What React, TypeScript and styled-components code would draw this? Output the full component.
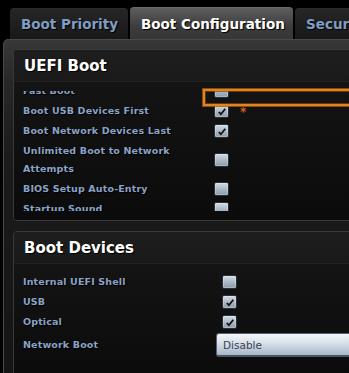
import React from "react";
import styled, { createGlobalStyle } from "styled-components";

const Global = createGlobalStyle`
  html, body { margin: 0; padding: 0; background: #000; overflow: hidden; }
  body { font-family: "DejaVu Sans", "Liberation Sans", sans-serif; }
`;

const Page = styled.div`
  width: 700px;
  height: 373px;
  padding-top: 7px;
  box-sizing: border-box;
  background: #000;
`;

const TabBar = styled.div`
  display: flex;
  align-items: flex-end;
  gap: 2px;
  padding-left: 10px;
  height: 32px;
`;

const Tab = styled.div<{ $active?: boolean; $w: number }>`
  width: ${(p) => p.$w}px;
  height: ${(p) => (p.$active ? 32 : 31)}px;
  box-sizing: border-box;
  display: flex;
  align-items: center;
  padding-left: 11px;
  border-radius: 4px 4px 0 0;
  font-weight: bold;
  font-size: 13.5px;
  color: ${(p) => (p.$active ? "#ffffff" : "#7f9cc4")};
  text-shadow: 1px 1px 1px #000;
  background: ${(p) =>
    p.$active
      ? "linear-gradient(#5e5e5e, #3c3c3c 60%, #363636)"
      : "linear-gradient(#262626, #181818)"};
  border-top: 1px solid ${(p) => (p.$active ? "#6a6a6a" : "#2c2c2c")};
`;

const Panel = styled.div`
  margin-left: 3px;
  width: 680px;
  height: 340px;
  box-sizing: border-box;
  border: 1px solid #4a4a4a;
  border-radius: 5px 0 0 0;
  background: linear-gradient(#383838, #282828 40px, #1b1b1b 120px, #151515);
  padding: 9px 0 0 9px;
  display: flex;
  flex-direction: column;
  gap: 10px;
`;

const Section = styled.div`
  position: relative;
  width: 650px;
  box-sizing: border-box;
  border: 1px solid #3a3a3a;
  border-radius: 4px;
  background: #0d0d0d;
  overflow: hidden;
  flex-shrink: 0;
`;

const SectionHeader = styled.div`
  height: 31px;
  display: flex;
  align-items: center;
  padding-left: 10px;
  background: linear-gradient(#1e1e1e, #1a1a1a);
  border-bottom: 1px solid #222;
  font-size: 15px;
  font-weight: bold;
  color: #fff;
  text-shadow: 1px 1px 1px #000;
`;

const Body = styled.div<{ $pt: number; $pb: number }>`
  position: relative;
  padding: ${(p) => p.$pt}px 0 ${(p) => p.$pb}px 9px;
  background: linear-gradient(#141414, #0b0b0b);
`;

const Viewport = styled.div`
  height: 120px;
  overflow: hidden;
`;

const Scroller = styled.div`
  margin-top: -10px;
`;

const Row = styled.div<{ $lw: number; $h?: number }>`
  display: grid;
  grid-template-columns: ${(p) => p.$lw}px auto;
  align-items: center;
  min-height: ${(p) => p.$h ?? 20}px;
  padding: 1px 0;
  box-sizing: border-box;
`;

const Label = styled.div`
  font-weight: bold;
  font-size: 9.5px;
  letter-spacing: 0.15px;
  line-height: 18px;
  color: #8aa2c6;
  text-shadow: 1px 1px 1px #000;
  width: 160px;
`;

const Control = styled.div`
  display: flex;
  align-items: center;
`;

const Box = styled.div<{ $ml: number }>`
  width: 15px;
  height: 14px;
  box-sizing: border-box;
  margin-left: ${(p) => p.$ml}px;
  border: 1px solid #26303b;
  border-radius: 2px;
  background: linear-gradient(#d3dce4, #a9b6c3 55%, #8e9cab);
  box-shadow: inset 0 0 0 1px rgba(255, 255, 255, 0.25);
  display: flex;
  align-items: center;
  justify-content: center;
`;

const Star = styled.span`
  color: #cf5f1c;
  font-weight: bold;
  font-size: 12px;
  margin-left: 11px;
  margin-top: 2px;
`;

const Focus = styled.div`
  position: absolute;
  left: 189px;
  top: 7px;
  width: 300px;
  height: 17px;
  box-sizing: border-box;
  border: 2px solid #e08420;
  box-shadow: 0 0 0 1px rgba(170, 90, 15, 0.8), inset 0 0 0 1px rgba(140, 70, 10, 0.7);
  pointer-events: none;
`;

const Select = styled.div`
  width: 220px;
  height: 24px;
  box-sizing: border-box;
  display: flex;
  align-items: center;
  padding-left: 6px;
  border-radius: 3px;
  border: 1px solid #55606d;
  border-bottom: 2px solid #4a5563;
  background: linear-gradient(#f4f7fa, #d6dfe9 45%, #a9b7c9);
  font-size: 10.5px;
  color: #3a4250;
`;

const Check = ({ on, ml = 8 }: { on?: boolean; ml?: number }) => (
  <Box $ml={ml}>
    {on && (
      <svg width="10" height="9" viewBox="0 0 10 9">
        <path d="M1.8 5 L3.9 7.2 L8.3 1.8" fill="none" stroke="#111" strokeWidth="1.8" />
      </svg>
    )}
  </Box>
);

export default function App() {
  return (
    <>
      <Global />
      <Page>
        <TabBar>
          <Tab $w={118}>Boot Priority</Tab>
          <Tab $w={163} $active>
            Boot Configuration
          </Tab>
          <Tab $w={120}>Security</Tab>
        </TabBar>
        <Panel>
          <Section>
            <SectionHeader>UEFI Boot</SectionHeader>
            <Body $pt={9} $pb={9}>
              <Viewport>
                <Scroller>
                  <Row $lw={183}>
                    <Label>Fast Boot</Label>
                    <Control>
                      <Check />
                    </Control>
                  </Row>
                  <Row $lw={183}>
                    <Label>Boot USB Devices First</Label>
                    <Control>
                      <Check on />
                      <Star>*</Star>
                    </Control>
                  </Row>
                  <Row $lw={183}>
                    <Label>Boot Network Devices Last</Label>
                    <Control>
                      <Check on />
                    </Control>
                  </Row>
                  <Row $lw={183} $h={38}>
                    <Label>Unlimited Boot to Network Attempts</Label>
                    <Control>
                      <Check />
                    </Control>
                  </Row>
                  <Row $lw={183}>
                    <Label>BIOS Setup Auto-Entry</Label>
                    <Control>
                      <Check />
                    </Control>
                  </Row>
                  <Row $lw={183}>
                    <Label>Startup Sound</Label>
                    <Control>
                      <Check />
                    </Control>
                  </Row>
                </Scroller>
              </Viewport>
              <Focus />
            </Body>
          </Section>
          <Section>
            <SectionHeader>Boot Devices</SectionHeader>
            <Body $pt={8} $pb={20}>
              <Row $lw={193}>
                <Label>Internal UEFI Shell</Label>
                <Control>
                  <Check ml={6} />
                </Control>
              </Row>
              <Row $lw={193}>
                <Label>USB</Label>
                <Control>
                  <Check on ml={6} />
                </Control>
              </Row>
              <Row $lw={193}>
                <Label>Optical</Label>
                <Control>
                  <Check on ml={6} />
                </Control>
              </Row>
              <Row $lw={193} $h={24}>
                <Label>Network Boot</Label>
                <Control>
                  <Select>Disable</Select>
                </Control>
              </Row>
            </Body>
          </Section>
        </Panel>
      </Page>
    </>
  );
}
